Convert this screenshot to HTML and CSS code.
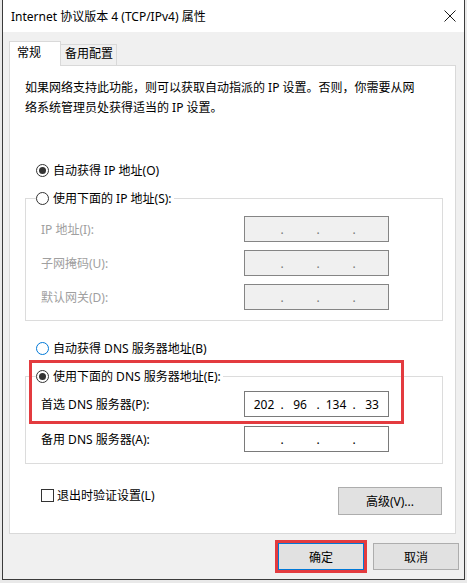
FILE: index.html
```html
<!DOCTYPE html>
<html lang="zh-CN">
<head>
    <meta charset="UTF-8">
    <title>Internet 协议版本 4 (TCP/IPv4) 属性</title>
    <link rel="stylesheet" href="styles.css">
</head>
<body>
    <div class="window">
        <div class="titlebar">
            <span class="title">Internet 协议版本 4 (TCP/IPv4) 属性</span>
            <svg class="close" width="12" height="12" viewBox="0 0 12 12">
                <path d="M0.5 0.5 L11.5 11.5 M11.5 0.5 L0.5 11.5" stroke="#1a1a1a" stroke-width="1" fill="none"/>
            </svg>
        </div>

        <div class="dialog">
            <div class="tabs">
                <div class="tab active">常规</div>
                <div class="tab">备用配置</div>
            </div>

            <div class="panel">
                <p class="intro">如果网络支持此功能，则可以获取自动指派的 IP 设置。否则，你需要从网<br>络系统管理员处获得适当的 IP 设置。</p>

                <!-- IP 地址 -->
                <div class="option first"><span class="radio checked"></span>自动获得 IP 地址(O)</div>
                <fieldset class="group ip-group">
                    <legend class="option"><span class="radio"></span>使用下面的 IP 地址(S):</legend>
                    <div class="rows">
                        <div class="row disabled">
                            <label>IP 地址(I):</label>
                            <div class="ipbox"><span class="seg"></span><span class="dot">.</span><span class="seg"></span><span class="dot">.</span><span class="seg"></span><span class="dot">.</span><span class="seg"></span></div>
                        </div>
                        <div class="row disabled">
                            <label>子网掩码(U):</label>
                            <div class="ipbox"><span class="seg"></span><span class="dot">.</span><span class="seg"></span><span class="dot">.</span><span class="seg"></span><span class="dot">.</span><span class="seg"></span></div>
                        </div>
                        <div class="row disabled">
                            <label>默认网关(D):</label>
                            <div class="ipbox"><span class="seg"></span><span class="dot">.</span><span class="seg"></span><span class="dot">.</span><span class="seg"></span><span class="dot">.</span><span class="seg"></span></div>
                        </div>
                    </div>
                </fieldset>

                <!-- DNS -->
                <div class="option dns-auto"><span class="radio hover"></span>自动获得 DNS 服务器地址(B)</div>
                <fieldset class="group dns-group">
                    <legend class="option"><span class="radio checked"></span>使用下面的 DNS 服务器地址(E):</legend>
                    <div class="rows">
                        <div class="row">
                            <label>首选 DNS 服务器(P):</label>
                            <div class="ipbox"><span class="seg">202</span><span class="dot">.</span><span class="seg">96</span><span class="dot">.</span><span class="seg">134</span><span class="dot">.</span><span class="seg">33</span></div>
                        </div>
                        <div class="row">
                            <label>备用 DNS 服务器(A):</label>
                            <div class="ipbox"><span class="seg"></span><span class="dot">.</span><span class="seg"></span><span class="dot">.</span><span class="seg"></span><span class="dot">.</span><span class="seg"></span></div>
                        </div>
                    </div>
                </fieldset>

                <div class="bottom-row">
                    <div class="check-option"><span class="checkbox"></span>退出时验证设置(L)</div>
                    <button class="btn advanced">高级(V)...</button>
                </div>

                <div class="highlight"></div>
            </div>

            <div class="footer">
                <button class="btn primary marked">确定</button>
                <button class="btn">取消</button>
            </div>
        </div>
    </div>
</body>
</html>
```

FILE: styles.css
```css
body {
    margin: 0;
    background: #e9e9e9;
    font-family: "Noto Sans", "Noto Sans CJK SC", sans-serif;
    font-size: 12px;
    color: #000;
}
.window {
    margin-left: 2px;
    width: 463px;
    box-sizing: border-box;
    border: 1px solid #3b3b3b;
    border-top: none;
    background: #f0f0f0;
}
.titlebar {
    height: 32px;
    box-sizing: border-box;
    background: #fff;
    display: flex;
    align-items: center;
    justify-content: space-between;
    padding: 0 8px;
}
.dialog {
    padding: 9px 6px 9px 6px;
}
.tabs {
    display: flex;
    align-items: flex-end;
    height: 24px;
}
.tab {
    box-sizing: border-box;
    width: 57px;
    height: 21px;
    margin-left: -1px;
    padding-left: 4px;
    line-height: 18px;
    background: #f0f0f0;
    border: 1px solid #d9d9d9;
    border-bottom: none;
}
.tab.active {
    position: relative;
    z-index: 1;
    width: 52px;
    height: 25px;
    margin-left: 0;
    margin-bottom: -1px;
    padding-left: 7px;
    line-height: 22px;
    background: #fff;
}
.panel {
    position: relative;
    width: 447px;
    box-sizing: border-box;
    background: #fff;
    border: 1px solid #d9d9d9;
    padding: 12px 12px 18px 15px;
}
.intro {
    margin: 0;
    line-height: 20px;
}
.option {
    display: flex;
    align-items: center;
    height: 20px;
}
.option.first {
    margin: 42px 0 0 11px;
}
.option.dns-auto {
    margin: 17px 0 0 11px;
}
.radio {
    width: 13px;
    height: 13px;
    box-sizing: border-box;
    border: 1px solid #333;
    border-radius: 50%;
    margin-right: 4px;
    display: flex;
    align-items: center;
    justify-content: center;
}
.radio.checked::after {
    content: "";
    width: 7px;
    height: 7px;
    border-radius: 50%;
    background: #333;
}
.radio.hover {
    border-color: #0078d7;
}
.group {
    margin: 8px 0 0;
    padding: 0;
    min-width: 0;
    border: 1px solid #dcdcdc;
}
.group legend {
    margin-left: 10px;
    padding: 0 2px 0 0;
}
.rows {
    display: flex;
    flex-direction: column;
    gap: 8px;
    padding: 8px 0 10px 15px;
}
.dns-group .rows {
    gap: 9px;
    padding: 5px 0 11px 15px;
}
.row {
    display: flex;
    align-items: center;
    height: 26px;
}
.row label {
    width: 203px;
}
.ipbox {
    width: 145px;
    height: 26px;
    box-sizing: border-box;
    border: 1px solid #7a7a7a;
    background: #fff;
    display: flex;
    align-items: center;
    padding-left: 3px;
}
.ipbox .seg {
    width: 32px;
    text-align: center;
}
.ipbox .dot {
    width: 4px;
    text-align: center;
}
.row.disabled label {
    color: #a0a0a0;
}
.row.disabled .ipbox {
    background: #f0f0f0;
    border-color: #858585;
    color: #7a7a7a;
}
.bottom-row {
    display: flex;
    justify-content: space-between;
    align-items: flex-start;
    margin-top: 23px;
}
.check-option {
    display: flex;
    align-items: center;
    height: 20px;
    margin: -2px 0 0 16px;
}
.checkbox {
    width: 13px;
    height: 13px;
    box-sizing: border-box;
    border: 1px solid #333;
    margin-right: 3px;
}
.btn {
    font: inherit;
    color: #000;
    width: 86px;
    height: 27px;
    box-sizing: border-box;
    padding: 0;
    background: #e1e1e1;
    border: 1px solid #adadad;
}
.btn.advanced {
    width: 104px;
    height: 28px;
    margin-right: 1px;
}
.btn.primary {
    border-color: #0078d7;
}
.btn.marked {
    box-shadow: 0 0 0 3px #e33b3f;
}
.footer {
    display: flex;
    justify-content: flex-end;
    gap: 9px;
    margin: 9px -1px 0 0;
}
.highlight {
    position: absolute;
    left: 19px;
    top: 294px;
    width: 375px;
    height: 64px;
    box-sizing: border-box;
    border: 3px solid #e33b3f;
}
```
